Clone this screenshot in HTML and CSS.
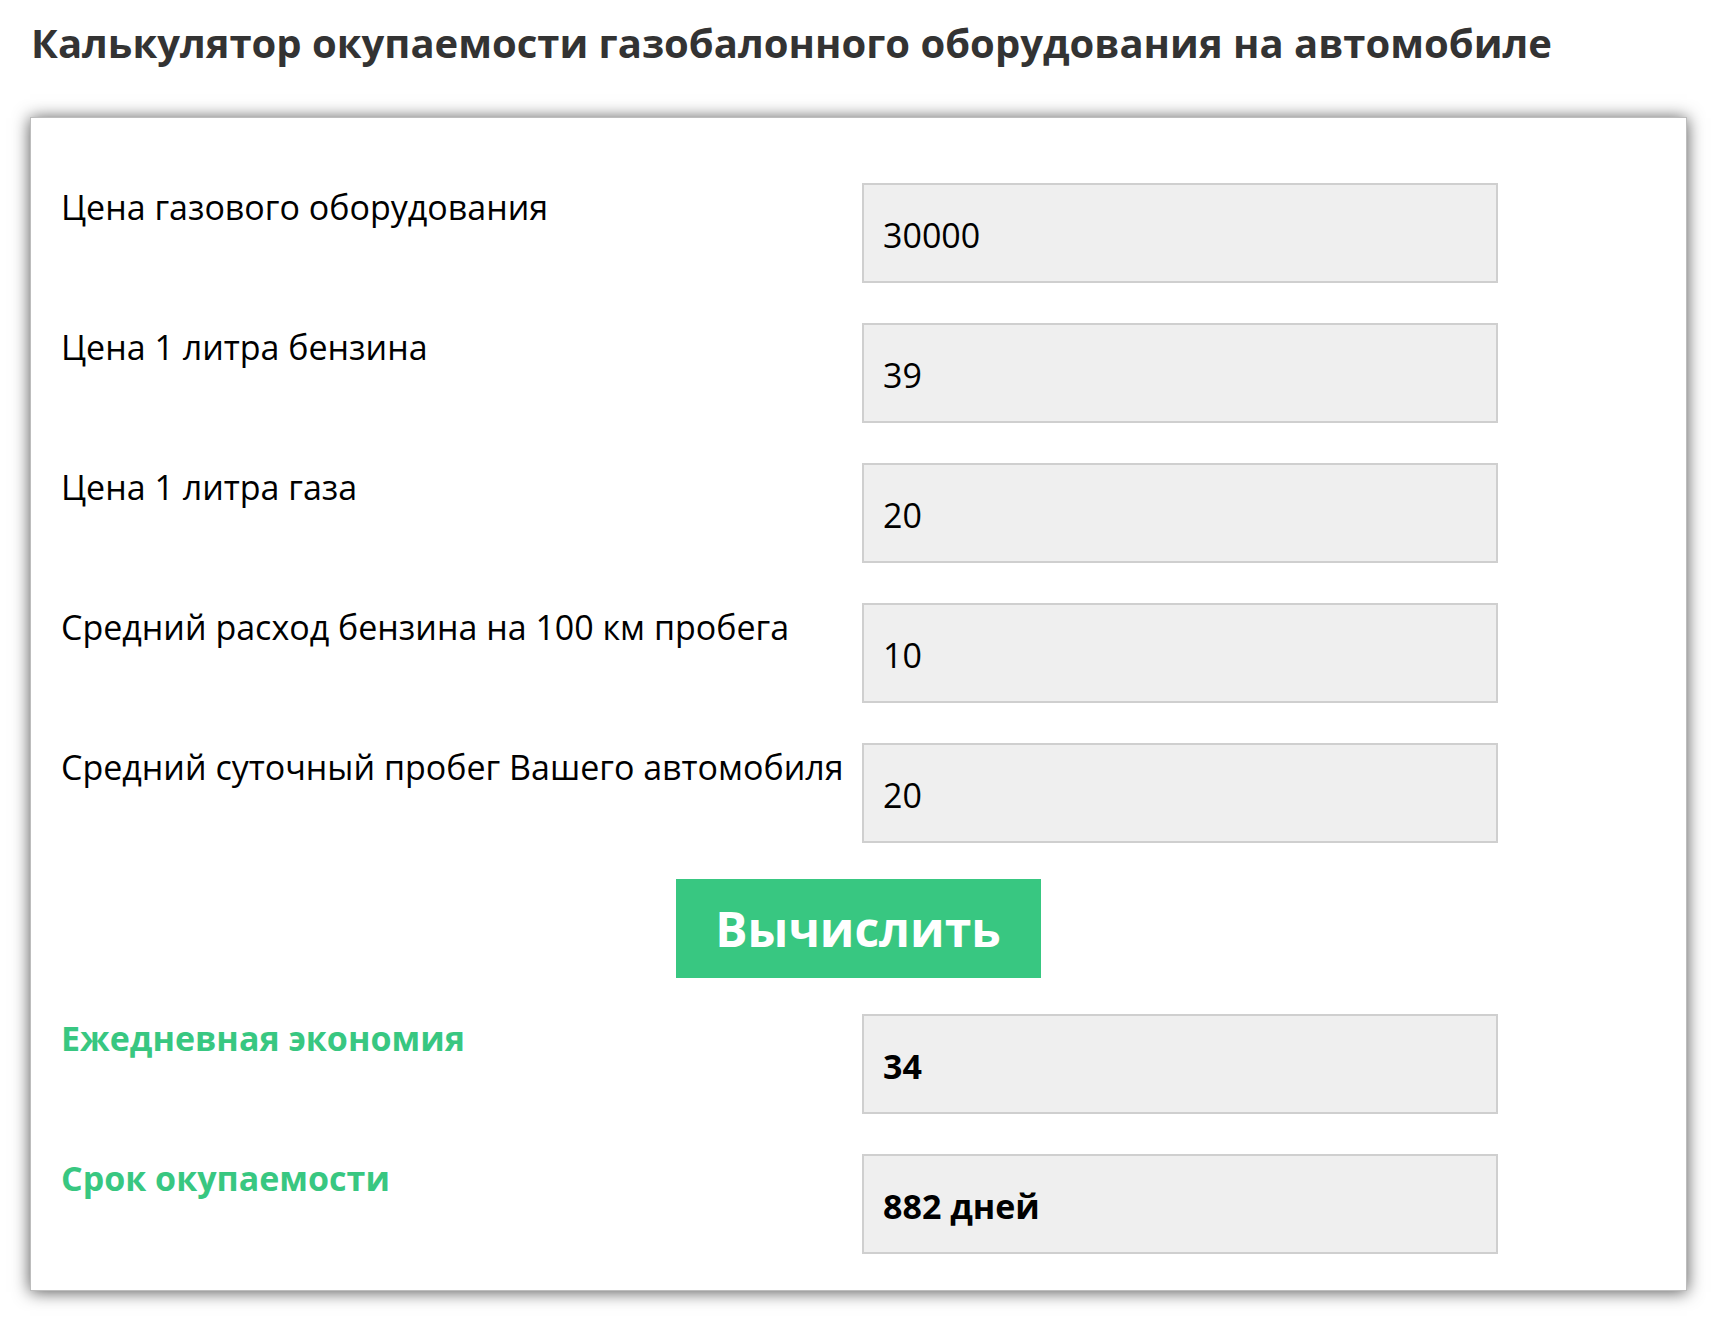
FILE: index.html
```html
<!DOCTYPE html>
<html lang="ru">
<head>
<meta charset="utf-8">
<title>Калькулятор окупаемости ГБО</title>
<link rel="stylesheet" href="styles.css">
</head>
<body>
<h1 class="title">Калькулятор окупаемости газобалонного оборудования на автомобиле</h1>
<div class="card">
  <div class="row">
    <div class="label">Цена газового оборудования</div>
    <div class="field">30000</div>
  </div>
  <div class="row">
    <div class="label">Цена 1 литра бензина</div>
    <div class="field">39</div>
  </div>
  <div class="row">
    <div class="label">Цена 1 литра газа</div>
    <div class="field">20</div>
  </div>
  <div class="row">
    <div class="label">Средний расход бензина на 100 км пробега</div>
    <div class="field">10</div>
  </div>
  <div class="row">
    <div class="label">Средний суточный пробег Вашего автомобиля</div>
    <div class="field">20</div>
  </div>
  <div class="actions">
    <button class="btn" type="button">Вычислить</button>
  </div>
  <div class="row">
    <div class="label result-label">Ежедневная экономия</div>
    <div class="field result">34</div>
  </div>
  <div class="row">
    <div class="label result-label">Срок окупаемости</div>
    <div class="field result">882 дней</div>
  </div>
</div>
</body>
</html>
```

FILE: styles.css
```css
html, body {
  background: #ffffff;
}
body {
  margin: 0;
  padding: 19px 31px 30px 30px;
  font-family: "Open Sans", "Noto Sans", sans-serif;
  color: #000;
}
.title {
  margin: 0 0 51px 1px;
  font-size: 40px;
  line-height: 47px;
  font-weight: 700;
  color: #333333;
  white-space: nowrap;
}
.card {
  background: #fff;
  border: 1px solid #bdbdbd;
  box-shadow: 0 1px 16px rgba(0, 0, 0, 0.68);
  padding: 65px 30px 36px 30px;
  display: flex;
  flex-direction: column;
  gap: 40px;
}
.row {
  display: grid;
  grid-template-columns: 801px 636px;
  align-items: start;
}
.label {
  font-size: 34px;
  line-height: 46px;
  padding-top: 1px;
  white-space: nowrap;
}
.field {
  box-sizing: border-box;
  height: 100px;
  background: #efefef;
  border: 2px solid #cfcfcf;
  padding: 3px 19px 0 19px;
  display: flex;
  align-items: center;
  font-size: 34px;
  line-height: 46px;
}
.result {
  font-weight: 700;
}
.result-label {
  color: #38c781;
  font-weight: 700;
}
.actions {
  display: flex;
  justify-content: center;
  margin: -4px 0 -4px 0;
}
.btn {
  width: 365px;
  height: 99px;
  border: none;
  background: #38c781;
  color: #fff;
  font-family: "Open Sans", "Noto Sans", sans-serif;
  font-weight: 700;
  font-size: 48px;
  padding: 0;
  margin-left: -1px;
  cursor: pointer;
}
```
